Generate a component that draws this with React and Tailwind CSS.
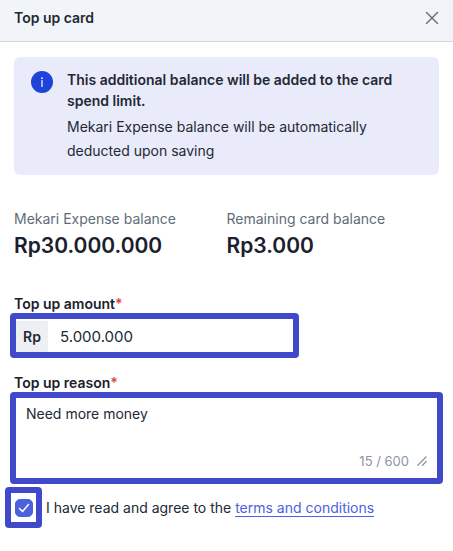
import { useState } from 'react'

function Balance({ label, value }) {
  return (
    <div className="flex flex-col">
      <dt className="text-sm leading-6 text-[#626b79]">{label}</dt>
      <dd className="text-[21px] leading-[30px] font-semibold text-[#1a202c]">{value}</dd>
    </div>
  )
}

function FieldLabel({ htmlFor, children }) {
  return (
    <label htmlFor={htmlFor} className="block px-1 text-sm leading-[19px] font-semibold text-[#1a202c]">
      {children}
      <span className="text-[#da473f]">*</span>
    </label>
  )
}

export default function App() {
  const [amount, setAmount] = useState('5.000.000')
  const [reason, setReason] = useState('Need more money')
  const [agreed, setAgreed] = useState(true)

  return (
    <div className="bg-white font-['Inter',sans-serif] text-[#232933]">
      {/* Header */}
      <header className="flex items-center justify-between border-b border-[#d0d6dd] bg-[#f1f5f9] px-3.5 pt-2 pb-[13px]">
        <h1 className="text-sm leading-5 font-semibold">Top up card</h1>
        <button type="button" aria-label="Close" className="text-[#626b79]">
          <svg viewBox="0 0 14 14" className="size-3.5" fill="none" stroke="currentColor" strokeWidth="1.4" strokeLinecap="round">
            <path d="M1.5 1.5l11 11M12.5 1.5l-11 11" />
          </svg>
        </button>
      </header>

      <form onSubmit={(e) => e.preventDefault()}>
        {/* Info banner */}
        <div className="mx-3.5 mt-[15px] flex gap-3.5 rounded-md bg-[#e9ebfb] px-[17px] pt-3 pb-3">
          <svg viewBox="0 0 22 22" className="mt-0.5 size-[22px] shrink-0" aria-hidden="true">
            <circle cx="11" cy="11" r="11" fill="#1d43d8" />
            <circle cx="11" cy="7.2" r="0.9" fill="#fff" />
            <path d="M11 9.5v6" stroke="#fff" strokeWidth="1.2" strokeLinecap="round" />
          </svg>
          <div className="text-sm">
            <p className="leading-[21px] font-semibold">This additional balance will be added to the card spend limit.</p>
            <p className="mt-1 leading-6">Mekari Expense balance will be automatically deducted upon saving</p>
          </div>
        </div>

        {/* Balances */}
        <dl className="mx-3.5 mt-8 grid grid-cols-2">
          <Balance label="Mekari Expense balance" value="Rp30.000.000" />
          <Balance label="Remaining card balance" value="Rp3.000" />
        </dl>

        <div className="mx-2.5 mt-[33px]">
          <FieldLabel htmlFor="amount">Top up amount</FieldLabel>
          <div className="flex h-[45px] w-2/3 rounded-sm border-6 border-[#4149cb]">
            <span className="mt-0.5 flex w-8 shrink-0 items-center justify-center bg-[#edf0f3] text-sm font-semibold">Rp</span>
            <input
              id="amount"
              value={amount}
              onChange={(e) => setAmount(e.target.value)}
              className="w-full min-w-0 px-3 pt-1 text-[15px] outline-none"
            />
          </div>
        </div>

        <div className="mx-2.5 mt-[15px]">
          <FieldLabel htmlFor="reason">Top up reason</FieldLabel>
          <div className="rounded-sm border-6 border-[#4149cb] pb-2">
            <textarea
              id="reason"
              rows={2}
              value={reason}
              onChange={(e) => setReason(e.target.value)}
              className="block w-full resize-none px-2.5 pt-1 pb-0.5 text-sm leading-6 outline-none"
            />
            <div className="flex items-center justify-end gap-2 pr-2.5 text-[13px] leading-[18px] text-[#8b95a5]">
              <span>15 / 600</span>
              <svg viewBox="0 0 10 10" className="size-2.5" fill="none" stroke="currentColor" strokeWidth="1.3" strokeLinecap="round">
                <path d="M0.8 9.2L9 1M5.5 9.2L9.2 5.5" />
              </svg>
            </div>
          </div>
        </div>

        {/* Agreement */}
        <div className="mt-[3px] flex items-center gap-1 pl-[5px] text-sm">
          <div className="relative flex h-[41px] w-[37px] shrink-0 items-center justify-center rounded-sm border-6 border-[#4149cb]">
            <input
              id="agree"
              type="checkbox"
              checked={agreed}
              onChange={(e) => setAgreed(e.target.checked)}
              className="peer size-[18px] shrink-0 appearance-none rounded-[5px] border border-[#4b61dd] checked:bg-[#4b61dd]"
            />
            <svg
              viewBox="0 0 18 18"
              className="pointer-events-none absolute hidden size-[18px] peer-checked:block"
              fill="none"
              stroke="#fff"
              strokeWidth="1.5"
              strokeLinecap="round"
              strokeLinejoin="round"
            >
              <path d="M4.5 9.5l3 3 6-7" />
            </svg>
          </div>
          <label htmlFor="agree">
            I have read and agree to the{' '}
            <a href="#terms" className="border-b border-[#4b61dd] text-[#4b61dd]">terms and conditions</a>
          </label>
        </div>
      </form>
    </div>
  )
}
